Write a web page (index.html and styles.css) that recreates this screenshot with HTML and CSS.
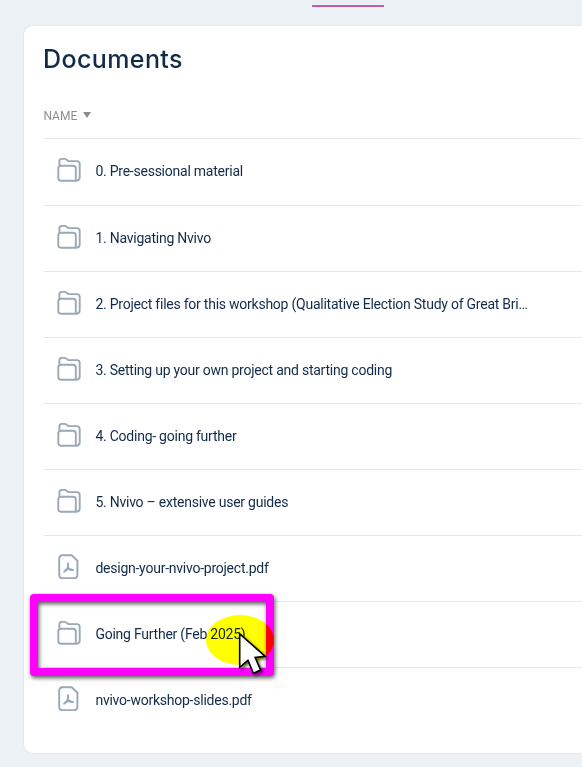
FILE: index.html
```html
<!DOCTYPE html>
<html lang="en">
<head>
<meta charset="utf-8">
<title>Documents</title>
<link rel="stylesheet" href="styles.css">
</head>
<body>
<svg class="sprite" aria-hidden="true">
  <symbol id="folder" viewBox="0 0 26 26">
    <path d="M3.4 8.2V4.4Q3.4 1.9 5.9 1.9H8.8Q10.3 1.9 11.1 3.1Q11.8 4.1 13.2 4.1H20.8Q23.7 4.1 23.7 7V20.6Q23.7 23.7 20.6 23.7H4.9Q2.3 23.7 2.3 21.1V11.4Q2.3 8.8 4.9 8.8H17Q19.8 8.8 19.8 11.6V23"/>
  </symbol>
  <symbol id="pdf" viewBox="0 0 26 26">
    <path d="M5.5 1.3H15.7L21.4 6.8V20.9Q21.4 24.1 18.2 24.1H6.4Q3.2 24.1 3.2 20.9V4.5Q3.2 1.3 6.4 1.3H15.7"/>
    <path class="mark" d="M11.9 9.3Q12.5 12.2 11.4 14.2Q10.2 16.7 8.2 17.6M11.9 13.4Q13.5 16.1 17 16M9.6 16.1Q12.2 14.6 14.6 15.3"/>
  </symbol>
</svg>
<div class="tabs"><span class="tab-active"></span></div>
<main class="card">
  <h1>Documents</h1>
  <div class="head">NAME<svg class="sort" viewBox="0 0 8 6"><path d="M0 0H8L4 6Z"/></svg></div>
  <ul class="list">
    <li><svg class="icon"><use href="#folder"/></svg><span>0. Pre-sessional material</span></li>
    <li><svg class="icon"><use href="#folder"/></svg><span>1. Navigating Nvivo</span></li>
    <li><svg class="icon"><use href="#folder"/></svg><span>2. Project files for this workshop (Qualitative Election Study of Great Bri…</span></li>
    <li><svg class="icon"><use href="#folder"/></svg><span>3. Setting up your own project and starting coding</span></li>
    <li><svg class="icon"><use href="#folder"/></svg><span>4. Coding- going further</span></li>
    <li><svg class="icon"><use href="#folder"/></svg><span>5. Nvivo – extensive user guides</span></li>
    <li><svg class="icon"><use href="#pdf"/></svg><span>design-your-nvivo-project.pdf</span></li>
    <li><svg class="icon"><use href="#folder"/></svg><span>Going Further (Feb 2025)</span></li>
    <li><svg class="icon"><use href="#pdf"/></svg><span>nvivo-workshop-slides.pdf</span></li>
  </ul>
</main>
<div class="callout"></div>
<div class="spot"></div>
<svg class="cursor" viewBox="0 0 36 50"><path d="M4.7 2.8V36.3L13 29.4L18.4 42.2L25.6 39.1L20.2 26.4L30.2 25.4Z"/></svg>
</body>
</html>
```
FILE: styles.css
```css
* { box-sizing: border-box; }
body {
  position: relative;
  margin: 0;
  height: 767px;
  overflow: hidden;
  background: #ebf1f5;
  color: #112b49;
  font-family: Roboto, "Liberation Sans", sans-serif;
}
.sprite { display: none; }
.tabs { height: 25px; padding: 5px 0 0 312px; }
.tab-active { display: block; width: 72px; height: 2px; background: #c45cab; }
.card {
  height: 729px;
  margin-left: 23px;
  padding: 16px 0 0 20px;
  border: 1px solid #e4e8eb;
  border-right: 0;
  border-radius: 10px 0 0 10px;
  background: #fff;
}
h1 {
  margin: 0 0 0 -1px;
  font: 500 25px/34px Inter, sans-serif;
  letter-spacing: 0.4px;
}
.head {
  display: flex;
  align-items: center;
  height: 62px;
  margin-left: -0.6px;
  padding-top: 17px;
  color: #8b8e90;
  font-size: 12px;
}
.sort { width: 8px; height: 6px; margin: -1px 0 0 5.6px; fill: #8b8e90; }
.list { margin: 0; padding: 0; list-style: none; }
.list li {
  display: flex;
  align-items: center;
  height: 66px;
  padding-bottom: 2px;
  border-top: 1px solid #e4e6e8;
  font-size: 14px;
  letter-spacing: -0.24px;
  white-space: nowrap;
}
.list li:first-child { height: 67px; }
.icon {
  width: 26px;
  height: 26px;
  margin: 0 13.4px 2px 12px;
  fill: none;
  stroke: #9ba8b6;
  stroke-width: 1.9;
  stroke-linejoin: round;
  stroke-linecap: round;
}
.mark { stroke-width: 2; }
.callout {
  position: absolute;
  left: 30px;
  top: 594px;
  width: 244px;
  height: 82px;
  border: 8px solid #f0f;
  border-radius: 4px;
  filter: drop-shadow(1px 2px 2px rgba(0, 0, 0, .65));
}
.spot {
  position: absolute;
  left: 206px;
  top: 615px;
  width: 68px;
  height: 50px;
  border-radius: 50%;
  background: #ff0;
  mix-blend-mode: multiply;
}
.cursor {
  position: absolute;
  left: 235px;
  top: 631px;
  width: 36px;
  height: 50px;
  fill: #fff;
  stroke: #000;
  stroke-width: 1.6;
  filter: drop-shadow(2px 2px 1.5px rgba(0, 0, 0, .55));
}
```
